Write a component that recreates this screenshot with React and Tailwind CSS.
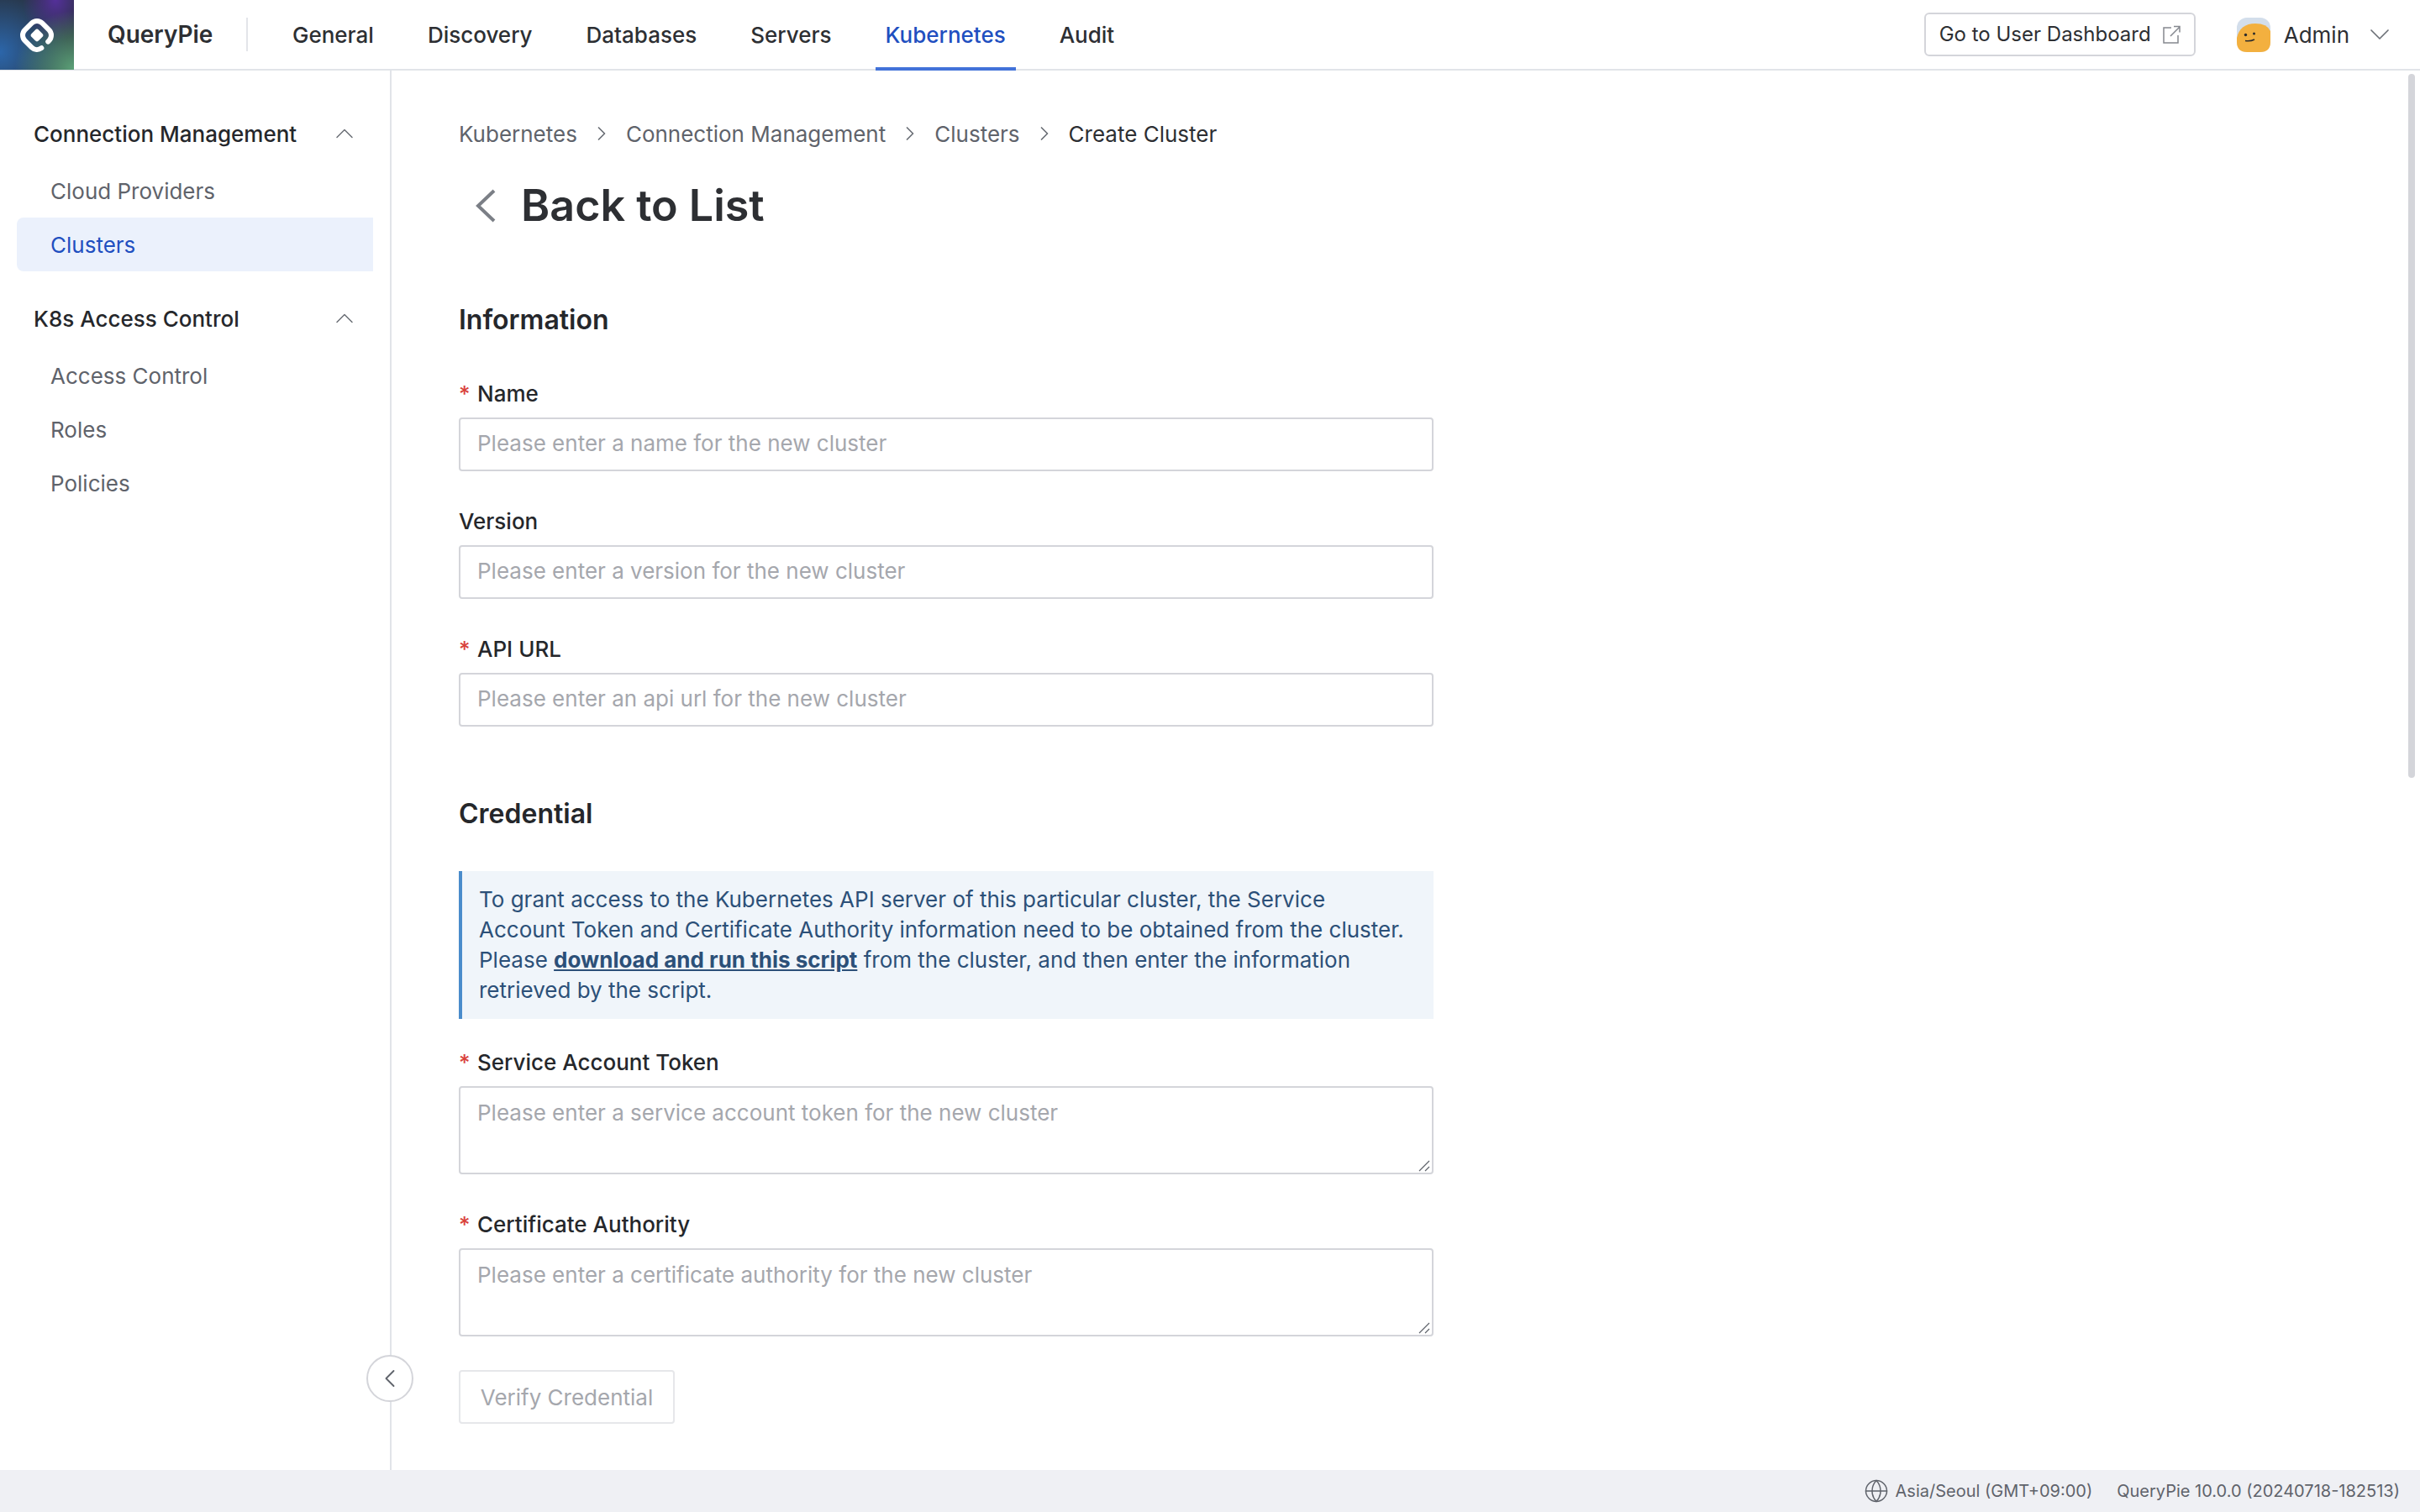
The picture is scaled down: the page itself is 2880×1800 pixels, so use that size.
import React from "react";
import { ChevronUp, ChevronDown, ChevronRight, ChevronLeft, Globe } from "lucide-react";

const navItems = ["General", "Discovery", "Databases", "Servers", "Kubernetes", "Audit"];

function Logo() {
    return (
        <div className="w-[88px] h-[83px] shrink-0 flex items-center justify-center bg-[radial-gradient(circle_at_100%_100%,#5ca278_0%,#5ca27800_58%),radial-gradient(ellipse_at_75%_0%,#54309a_0%,#54309a00_42%),radial-gradient(circle_at_0%_75%,#2c66aa_0%,#2c66aa00_75%),linear-gradient(#27303c,#27303c)]">
            <svg width="40" height="40" viewBox="0 0 40 40" fill="none">
                <rect
                    x="5.35"
                    y="5.35"
                    width="29.3"
                    height="29.3"
                    rx="9"
                    transform="rotate(45 20 20)"
                    stroke="white"
                    strokeWidth="6"
                    strokeLinecap="round"
                    strokeDasharray="27 11 63.7 0"
                />
                <rect x="14" y="14" width="12" height="12" rx="3" transform="rotate(45 20 20)" fill="white" />
            </svg>
        </div>
    );
}

function Avatar() {
    return (
        <svg width="40" height="41" viewBox="0 0 40 41">
            <rect width="40" height="41" rx="12" fill="#d3deeb" />
            <path d="M0 24 Q4 7 22 7 Q36 7 40 16 V29 Q40 41 28 41 H12 Q0 41 0 29 Z" fill="#f3b03f" />
            <circle cx="10.5" cy="20.5" r="1.7" fill="#2b2b2b" />
            <circle cx="20.5" cy="19" r="1.5" fill="#2b2b2b" />
            <path d="M10 27.5 Q16 28.5 21 26" stroke="#2b2b2b" strokeWidth="1.6" fill="none" />
        </svg>
    );
}

function OpenIcon() {
    return (
        <svg width="21" height="22" viewBox="0 0 21 22" fill="none" stroke="#85888f" strokeWidth="1.5">
            <path d="M10 3 H1 V21 H18 V12" />
            <path d="M9 13 L20 2 M13 1.5 H20 V8.5" />
        </svg>
    );
}

function Label({ children, required }) {
    return (
        <div className="h-[40px] flex items-center text-[26px] font-medium text-[#25272b]">
            {required && <span className="w-[22px] text-[#d9423a]">*</span>}
            {children}
        </div>
    );
}

function TextInput({ placeholder }) {
    return (
        <input
            placeholder={placeholder}
            className="block w-full h-[64px] px-[20px] pb-[3px] border-2 border-[#d4d5da] rounded-[4px] text-[26px] placeholder:text-[#a5a7ad] outline-none"
        />
    );
}

function TextArea({ placeholder }) {
    return (
        <div className="relative">
            <textarea
                placeholder={placeholder}
                className="block w-full h-[105px] px-[20px] pt-[12px] pb-[10px] border-2 border-[#d4d5da] rounded-[4px] text-[26px] leading-[36px] placeholder:text-[#a5a7ad] outline-none resize-none"
            />
            <svg className="absolute right-[4px] bottom-[3px]" width="14" height="14" viewBox="0 0 14 14" stroke="#5f636b" strokeWidth="1.2">
                <path d="M1 13 L13 1 M8 13 L13 8" />
            </svg>
        </div>
    );
}

function SideGroup({ title, items, active }) {
    return (
        <div>
            <div className="h-[64px] mb-[4px] pl-[40px] pr-[36px] flex items-center justify-between text-[26px] font-medium text-[#25272b]">
                <span>{title}</span>
                <ChevronUp className="w-[36px] h-[36px] text-[#6b6f76]" strokeWidth={1} />
            </div>
            {items.map((item) => (
                <div
                    key={item}
                    className={
                        item === active
                            ? "h-[64px] ml-[20px] mr-[20px] pl-[40px] flex items-center rounded-l-[8px] text-[26px] bg-[#ebf1fc] text-[#1f4fc0]"
                            : "h-[64px] ml-[20px] mr-[20px] pl-[40px] flex items-center text-[26px] text-[#5f636b]"
                    }
                >
                    {item}
                </div>
            ))}
        </div>
    );
}

export default function App() {
    const crumbs = ["Kubernetes", "Connection Management", "Clusters"];

    return (
        <div className="h-[1800px] flex flex-col relative overflow-hidden bg-white font-['Inter',sans-serif] text-[#2d2f33]">
            {/* Header */}
            <header className="h-[84px] shrink-0 flex items-start border-b-2 border-[#e1e4e9]">
                <Logo />
                <div className="w-[207px] h-[82px] shrink-0 flex items-center pl-[40px] text-[28px] font-semibold">
                    QueryPie
                    <div className="ml-[40px] w-[2px] h-[40px] shrink-0 bg-[#e3e5e9]" />
                </div>
                <nav className="flex gap-[40px] ml-[41px] h-[84px] text-[26px] font-medium">
                    {navItems.map((item) => (
                        <div
                            key={item}
                            className={
                                item === "Kubernetes"
                                    ? "h-[84px] px-[12px] pb-[2px] flex items-center text-[#1f4fc0] border-b-[4px] border-[#4272d9] pt-[4px]"
                                    : "h-[82px] px-[12px] flex items-center"
                            }
                        >
                            {item}
                        </div>
                    ))}
                </nav>
                <div className="ml-auto h-[82px] flex items-center">
                    <div className="w-[323px] h-[52px] flex items-center justify-between pl-[16px] pr-[16px] border-2 border-[#d4d5da] rounded-[6px] text-[24px] whitespace-nowrap">
                        Go to User Dashboard
                        <OpenIcon />
                    </div>
                    <div className="ml-[49px] mr-[28px] flex items-center">
                        <Avatar />
                        <span className="ml-[16px] text-[26px]">Admin</span>
                        <ChevronDown className="ml-[16px] w-[40px] h-[40px] text-[#6b6f76]" strokeWidth={1} />
                    </div>
                </div>
            </header>

            <div className="flex-1 flex min-h-0">
                {/* Sidebar */}
                <aside className="w-[466px] shrink-0 border-r-2 border-[#e1e4e9] pt-[43px] flex flex-col gap-[24px]">
                    <SideGroup title="Connection Management" items={["Cloud Providers", "Clusters"]} active="Clusters" />
                    <SideGroup title="K8s Access Control" items={["Access Control", "Roles", "Policies"]} />
                </aside>

                {/* Contenido */}
                <main className="flex-1 pl-[80px] pt-[55px]">
                    <div className="w-[1160px]">
                        <div className="h-[40px] flex items-center text-[26px] text-[#5f636b]">
                            {crumbs.map((crumb) => (
                                <React.Fragment key={crumb}>
                                    <span>{crumb}</span>
                                    <ChevronRight className="mx-[15px] w-[28px] h-[28px] text-[#6b6f76]" strokeWidth={1.5} />
                                </React.Fragment>
                            ))}
                            <span className="text-[#2d2f33]">Create Cluster</span>
                        </div>

                        <div className="mt-[36px] h-[60px] flex items-center">
                            <svg className="ml-[20px] shrink-0" width="24" height="40" viewBox="0 0 24 40" fill="none" stroke="#7b7f86" strokeWidth="4">
                                <path d="M22 2 L3 20 L22 38" />
                            </svg>
                            <h1 className="ml-[30px] text-[52px] font-semibold">Back to List</h1>
                        </div>

                        <h2 className="mt-[82px] h-[48px] flex items-center text-[32px] font-semibold text-[#25272b]">Information</h2>

                        <div className="mt-[43px] flex flex-col gap-[39px]">
                            <div>
                                <Label required>Name</Label>
                                <div className="mt-[9px]"><TextInput placeholder="Please enter a name for the new cluster" /></div>
                            </div>
                            <div>
                                <Label>Version</Label>
                                <div className="mt-[9px]"><TextInput placeholder="Please enter a version for the new cluster" /></div>
                            </div>
                            <div>
                                <Label required>API URL</Label>
                                <div className="mt-[9px]"><TextInput placeholder="Please enter an api url for the new cluster" /></div>
                            </div>
                        </div>

                        <h2 className="mt-[80px] h-[48px] flex items-center text-[32px] font-semibold text-[#25272b]">Credential</h2>

                        <div className="mt-[44px] pl-[20px] pr-[20px] py-[16px] border-l-4 border-[#4a8ccb] bg-[#f0f5fa] text-[26px] leading-[36px] text-[#2c5078]">
                            To grant access to the Kubernetes API server of this particular cluster, the Service Account Token and Certificate Authority information need to be obtained from the cluster. Please{" "}
                            <span className="font-bold underline">download and run this script</span>{" "}
                            from the cluster, and then enter the information retrieved by the script.
                        </div>

                        <div className="mt-[31px]">
                            <Label required>Service Account Token</Label>
                            <div className="mt-[9px]"><TextArea placeholder="Please enter a service account token for the new cluster" /></div>
                        </div>
                        <div className="mt-[39px]">
                            <Label required>Certificate Authority</Label>
                            <div className="mt-[9px]"><TextArea placeholder="Please enter a certificate authority for the new cluster" /></div>
                        </div>

                        <button className="mt-[40px] w-[257px] h-[64px] border-2 border-[#e6e7ea] rounded-[4px] text-[26px] text-[#a5a7ad]">
                            Verify Credential
                        </button>
                    </div>
                </main>
            </div>

            {/* Footer */}
            <footer className="h-[50px] shrink-0 flex items-center justify-end pr-[24px] bg-[#eff0f4] text-[20px] text-[#5f636b]">
                <Globe className="w-[30px] h-[30px]" strokeWidth={1.2} />
                <span className="ml-[8px]">Asia/Seoul (GMT+09:00)</span>
                <span className="ml-[29px]">QueryPie 10.0.0 (20240718-182513)</span>
            </footer>

            {/* Boton colapsar y scrollbar */}
            <div className="absolute left-[436px] top-[1613px] w-[56px] h-[56px] rounded-full border-2 border-[#d4d5da] bg-white flex items-center justify-center">
                <ChevronLeft className="w-[36px] h-[36px] text-[#5f636b]" strokeWidth={1.25} />
            </div>
            <div className="absolute left-[2866px] top-[88px] w-[8px] h-[838px] rounded-full bg-[#d4d5da]" />
        </div>
    );
}
